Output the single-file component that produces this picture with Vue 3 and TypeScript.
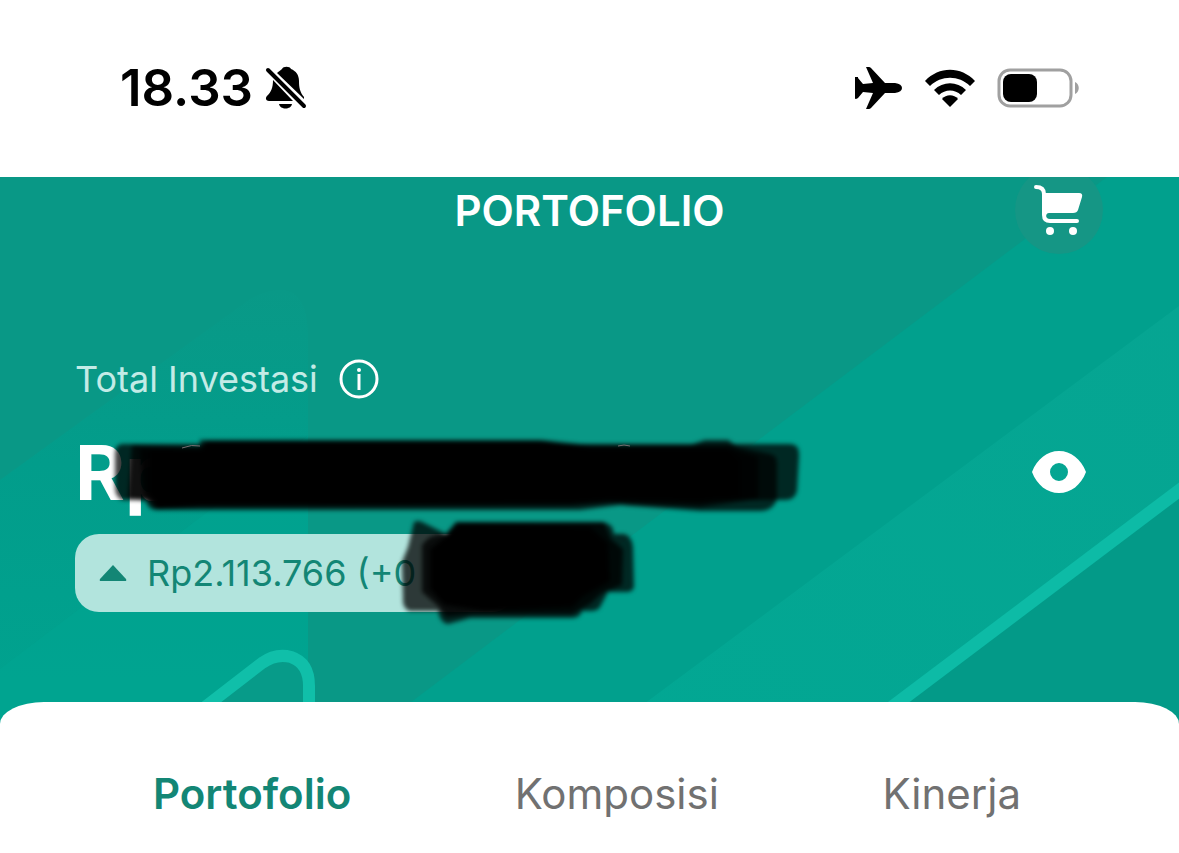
<script setup lang="ts">
import { ref } from 'vue'

interface Tab {
  id: string
  label: string
}

const tabs: Tab[] = [
  { id: 'portfolio', label: 'Portofolio' },
  { id: 'composition', label: 'Komposisi' },
  { id: 'performance', label: 'Kinerja' },
]
const activeTab = ref<string>('portfolio')
</script>

<template>
  <div class="screen">
    <header class="status">
      <div class="status-side">
        <time class="clock">18.33</time>
        <svg class="bell" viewBox="0 0 42 44" aria-hidden="true">
          <path d="M12 7 C14 5 16 4 17 3 C18 0 25 0 26 3 C31 5 34 9 34 15 C34 22 35 26 39 31 L39 33 Z" />
          <path d="M8 14 L28 35 H4 C1 35 0 32 2 30 C6 26 8 22 8 14 Z" />
          <path d="M14 38 H27 C26 44 15 44 14 38 Z" />
          <path d="M3 4 L39 40" fill="none" stroke="#000" stroke-width="4" stroke-linecap="round" />
        </svg>
      </div>
      <div class="status-side status-icons">
        <svg class="plane" viewBox="0 0 48 42" aria-hidden="true">
          <path d="M11 0 H14 Q15 0 16 1 L30 16 H40 Q47 17 47 21 Q47 25 40 26 H30 L16 41 Q15 42 14 42 H11 L18 26 L8 25 L3 31 Q2 32 0 32 L2 21 L0 10 Q2 10 3 11 L8 17 L18 16 Z" />
          <path d="M0 10 H3 V31 H0 Z" />
        </svg>
        <svg class="wifi" viewBox="0 0 52 38" aria-hidden="true">
          <path d="M1 12 C15 -3 37 -3 51 12 L46 17 C35 6 17 6 6 17 Z" />
          <path d="M10 21 C19 12 33 12 42 21 L37 26 C31 20 21 20 15 26 Z" />
          <path d="M18 30 C22 25 30 25 34 30 L26 38 Z" />
        </svg>
        <svg class="battery" viewBox="0 0 82 40" aria-hidden="true">
          <rect x="2" y="2" width="72" height="36" rx="11" fill="none" stroke="#a0a0a0" stroke-width="3" />
          <rect x="6" y="6" width="34" height="28" rx="8" />
          <path d="M78 14 C83 16 83 24 78 26 Z" fill="#a0a0a0" />
        </svg>
      </div>
    </header>

    <main class="hero">
      <svg class="decor" viewBox="0 0 1179 547" preserveAspectRatio="none" aria-hidden="true">
        <defs>
          <linearGradient id="peak" x1="0" y1="0" x2="0" y2="1">
            <stop offset="0" stop-color="#099987" />
            <stop offset="0.4" stop-color="#029d8b" />
            <stop offset="1" stop-color="#00a38f" />
          </linearGradient>
          <linearGradient id="band" x1="0" y1="1" x2="1" y2="0">
            <stop offset="0" stop-color="#02a793" />
            <stop offset="1" stop-color="#06a592" />
          </linearGradient>
        </defs>
        <path d="M0 303 L250 122 Q308 92 308 160 V547 H0 Z" fill="url(#peak)" />
        <path d="M0 492 L308 259 V547 H0 Z" fill="#00a792" opacity="0.45" />
        <path d="M382 547 L1107 0 H1179 V547 Z" fill="#01a08d" />
        <path d="M617 547 L1179 129 V547 Z" fill="url(#band)" />
        <path d="M867 547 L1179 314 V547 Z" fill="#039a88" />
        <path d="M863 552 L1189 306" fill="none" stroke="#0dbba6" stroke-width="13" />
        <path d="M183 547 L262 486 Q276 476 291 480 Q309 486 309 509 V547" fill="#079b89" stroke="#10bfa9" stroke-width="12" />
      </svg>

      <div class="title-bar">
        <h1>PORTOFOLIO</h1>
        <button class="cart" type="button" aria-label="Keranjang">
          <svg viewBox="0 0 50 52" aria-hidden="true">
            <path d="M2 3 Q10 3 10 10 V31 Q10 37 16 37 H43" fill="none" stroke="#fff" stroke-width="4" stroke-linecap="round" />
            <path d="M9 9 H45 Q49 9 48 13 L44 26 Q43 29 39 29 H15 Q12 29 12 33 H10 Z" fill="#fff" />
            <circle cx="16" cy="47" r="4" fill="#fff" />
            <circle cx="39" cy="47" r="4" fill="#fff" />
          </svg>
        </button>
      </div>

      <section class="summary">
        <div class="caption">
          <span>Total Investasi</span>
          <button class="plain" type="button" aria-label="Info">
            <svg class="info" viewBox="0 0 40 40" aria-hidden="true">
              <circle cx="20" cy="20" r="18" fill="none" stroke="#fff" stroke-width="3" />
              <circle cx="20" cy="11" r="2" fill="#fff" />
              <path d="M20 15 V31" stroke="#fff" stroke-width="3" />
            </svg>
          </button>
        </div>
        <div class="amount-row">
          <strong class="amount">Rp</strong>
          <button class="plain" type="button" aria-label="Tampilkan saldo">
            <svg class="eye" viewBox="0 0 54 44" aria-hidden="true">
              <path fill="#fff" fill-rule="evenodd" d="M0 22 C5 9 15 1 27 1 S49 9 54 22 C49 35 39 43 27 43 S5 35 0 22 Z M18 22 A9 9 0 1 0 36 22 A9 9 0 1 0 18 22 Z" />
            </svg>
          </button>
        </div>
        <div class="gain">
          <svg class="arrow" viewBox="0 0 28 16" aria-hidden="true">
            <path d="M14 0 L27 14 Q28 16 26 16 H2 Q0 16 1 14 Z" fill="#138675" />
          </svg>
          <span>Rp2.113.766 (+0</span>
        </div>
      </section>

      <svg class="marker" viewBox="0 0 820 460" aria-hidden="true">
        <defs>
          <filter id="soft" x="-5%" y="-20%" width="110%" height="140%">
            <feGaussianBlur stdDeviation="2" />
          </filter>
        </defs>
        <g filter="url(#soft)">
          <path d="M122 267 H790 Q800 267 799 280 L797 314 Q795 323 785 323 H122 Q115 320 115 310 V276 Q115 268 122 267 Z" opacity="0.75" />
          <path d="M132 268 L200 270 V263 H540 L590 268 H690 L705 263 H728 L738 270 L770 277 Q777 278 777 286 V322 Q773 334 760 334 H700 L620 328 L580 333 H160 Q148 334 146 324 L128 321 Z" opacity="0.75" />
          <path d="M140 272 H202 L206 264 H545 L590 271 H728 L758 280 V322 L700 330 L610 326 L570 329 L200 330 L155 332 L144 316 Z" opacity="0.8" />
          <path d="M150 273 H202 L206 266 H545 L590 271 H728 L740 283 V320 L700 325 L610 323 L570 326 L200 328 L158 331 L150 316 Z" />
          <path d="M414 345 Q418 343 422 345 L446 357 L456 345 H602 Q613 346 614 357 H624 Q632 359 633 370 L634 410 Q633 415 626 415 H608 L600 430 Q598 434 590 434 H582 Q580 441 572 441 H470 L448 447 Q440 446 438 434 H410 Q402 432 403 421 L402 385 L408 370 Z" opacity="0.75" />
          <path d="M422 368 Q430 356 446 357 L457 345 H604 L611 362 L623 372 L622 408 L602 416 L590 427 L572 437 H475 L446 440 L438 429 L422 415 Z" opacity="0.8" />
          <path d="M430 372 L450 356 L460 347 L590 350 L608 366 L610 404 L582 420 L572 430 L484 434 L444 428 L430 412 Z" />
        </g>
        <path d="M182 271 Q192 267 200 269 M618 269 Q624 267 630 269" fill="none" stroke="#786d70" stroke-width="1" />
      </svg>
    </main>

    <nav class="sheet" role="tablist" aria-label="Portofolio">
      <button
        v-for="tab in tabs"
        :key="tab.id"
        type="button"
        role="tab"
        class="tab"
        :class="{ active: activeTab === tab.id }"
        :aria-selected="activeTab === tab.id"
        @click="activeTab = tab.id"
      >
        {{ tab.label }}
      </button>
    </nav>
  </div>
</template>

<style>
body {
  margin: 0;
  background: #fff;
}
</style>

<style scoped>
.screen {
  display: flex;
  flex-direction: column;
  min-height: 100vh;
  font-family: Inter, "Liberation Sans", sans-serif;
  background: #fff;
}

button {
  margin: 0;
  padding: 0;
  border: 0;
  background: none;
  font-family: inherit;
  cursor: pointer;
}

svg {
  display: block;
}

.status {
  display: flex;
  align-items: center;
  justify-content: space-between;
  height: 177px;
  padding: 0 100px 2px 120px;
  box-sizing: border-box;
}

.status-side {
  display: flex;
  align-items: center;
  gap: 12px;
}

.status-icons {
  gap: 21px;
}

.clock {
  font-size: 51px;
  line-height: 60px;
  font-weight: 600;
  color: #000;
}

.bell {
  width: 42px;
  height: 44px;
}

.plane {
  width: 48px;
  height: 42px;
}

.wifi {
  width: 52px;
  height: 38px;
}

.battery {
  width: 82px;
  height: 40px;
}

.hero {
  position: relative;
  background: #099886;
  padding-bottom: 112px;
}

.decor {
  position: absolute;
  inset: 0;
  width: 100%;
  height: 100%;
}

.title-bar {
  position: relative;
  display: grid;
  grid-template-columns: 1fr auto 1fr;
  align-items: start;
  height: 172px;
  padding: 0 76px;
  overflow: hidden;
}

h1 {
  grid-column: 2;
  margin: 8px 0 0;
  font-size: 42px;
  line-height: 52px;
  font-weight: 600;
  color: #fff;
}

.cart {
  justify-self: end;
  display: flex;
  align-items: center;
  justify-content: center;
  width: 88px;
  height: 88px;
  margin-top: -11px;
  border-radius: 50%;
  background: #159685;
}

.cart svg {
  width: 50px;
  height: 52px;
}

.summary {
  position: relative;
  padding: 0 76px 0 75px;
}

.caption {
  display: flex;
  align-items: center;
  gap: 21px;
  height: 60px;
  font-size: 36px;
  color: #c3ebe6;
}

.info {
  width: 40px;
  height: 40px;
}

.amount-row {
  display: flex;
  align-items: center;
  justify-content: space-between;
  height: 125px;
  padding-right: 17px;
}

.amount {
  font-size: 76px;
  line-height: 92px;
  font-weight: 700;
  color: #fff;
}

.eye {
  width: 54px;
  height: 44px;
}

.gain {
  display: flex;
  align-items: center;
  gap: 20px;
  width: fit-content;
  height: 78px;
  padding: 0 100px 0 24px;
  border-radius: 24px;
  background: #b2e4dd;
  font-size: 36px;
  color: #138675;
}

.arrow {
  width: 28px;
  height: 16px;
}

.marker {
  position: absolute;
  top: 0;
  left: 0;
  width: 820px;
  height: 460px;
  pointer-events: none;
}

.sheet {
  position: relative;
  flex: 1;
  display: flex;
  align-items: center;
  justify-content: space-between;
  min-height: 151px;
  margin-top: -22px;
  padding: 32px 158px 0 153px;
  box-sizing: border-box;
  border-radius: 44px 44px 0 0 / 22px 22px 0 0;
  background: #fff;
}

.tab {
  font-size: 42px;
  line-height: 52px;
  font-weight: 400;
  color: #717171;
}

.tab.active {
  font-weight: 600;
  color: #138675;
}
</style>
